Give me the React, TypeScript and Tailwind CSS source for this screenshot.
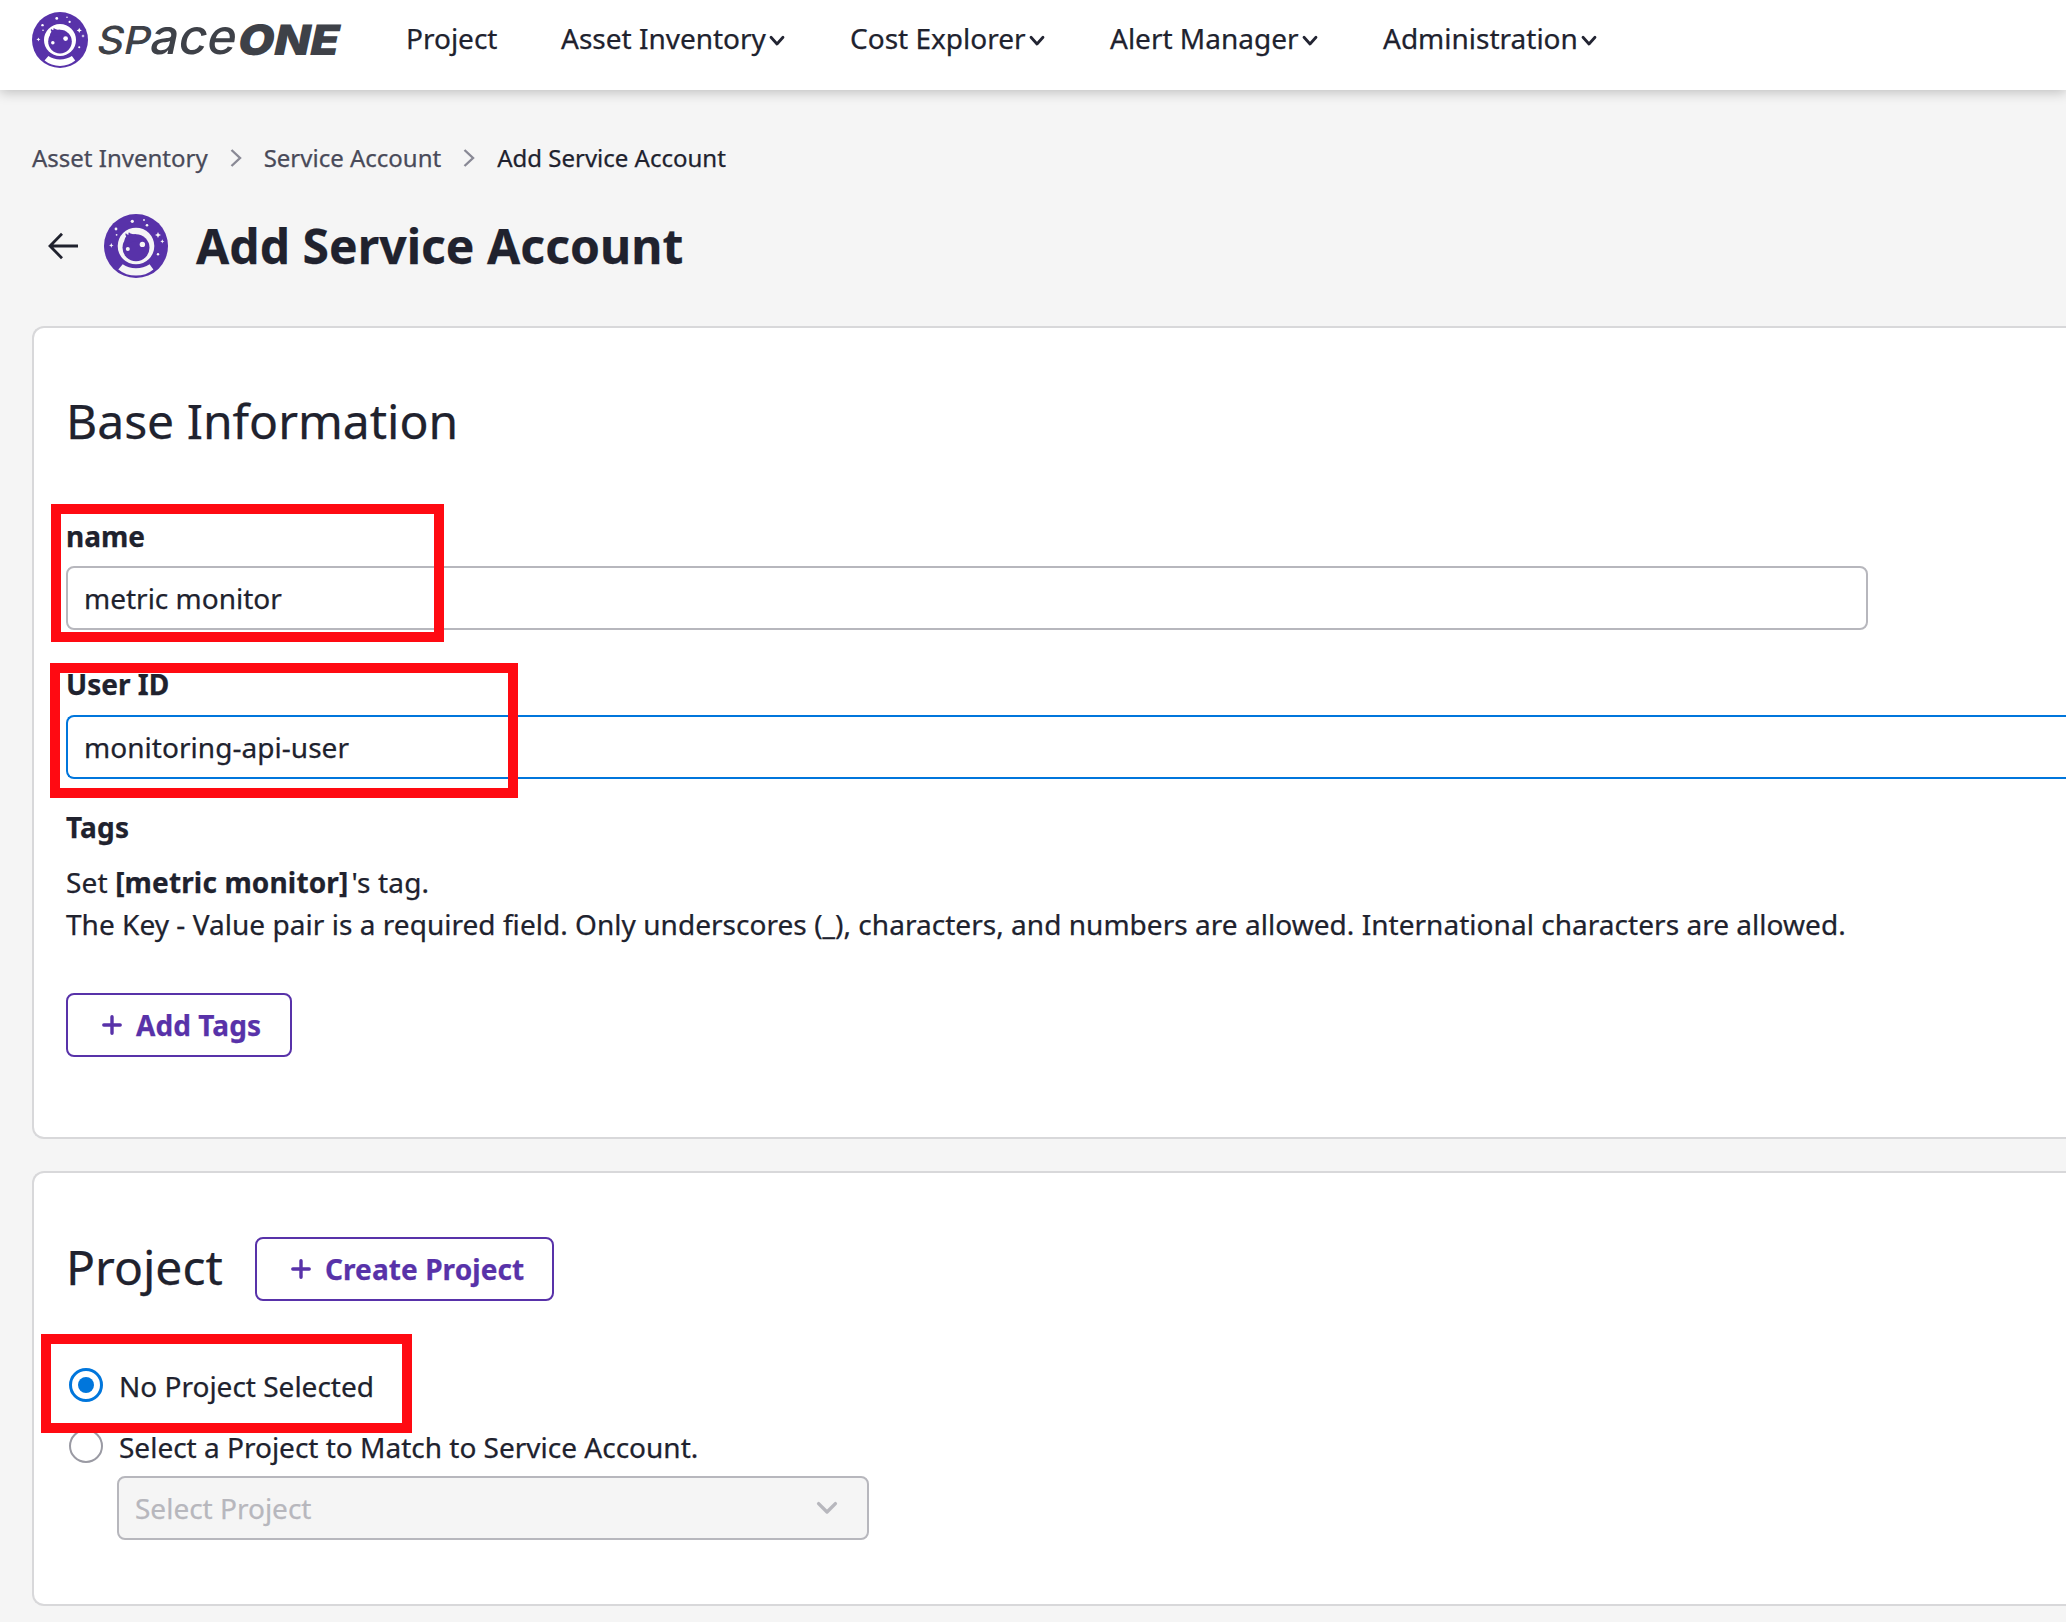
import type { ReactNode } from "react";

function AstronautIcon({ className, ink }: { className: string; ink: string }) {
  return (
    <svg viewBox="0 0 64 64" className={className}>
      <circle cx="32" cy="32" r="32" fill="#5832A9" />
      <path d="M18.7 50.3Q24.5 54.2 32 54.2Q39.5 54.2 45.6 50.3L49.4 55.4Q42 61.6 32 61.6Q22 61.6 14.3 55.4Z" fill={ink} />
      <circle cx="32" cy="32" r="18.3" fill={ink} />
      <circle cx="32" cy="33.8" r="13.5" fill="#5832A9" />
      <path d="M20.5 29Q20 24.5 22.2 22.5Q20.8 20.8 21.8 19Q23 21 24.6 20.6Q24 19.2 25 18.3Q26.6 20.4 32 20.3L34 27Z" fill="#5832A9" />
      <g fill={ink}>
        <circle cx="38.4" cy="30.4" r="2.7" />
        <circle cx="23.8" cy="35" r="2" />
        <circle cx="28.3" cy="7.3" r="1.6" />
        <circle cx="40" cy="6" r="0.9" />
        <circle cx="43" cy="11.3" r="1.3" />
        <circle cx="12" cy="15" r="1.4" />
        <circle cx="12.6" cy="20.8" r="0.9" />
        <circle cx="54" cy="40.3" r="1.2" />
        <path d="M54 18L54.9 20.1L57 21L54.9 21.9L54 24L53.1 21.9L51 21L53.1 20.1Z" />
        <path d="M58.3 25.3L58.9 26.8L60.3 27.4L58.9 28L58.3 29.5L57.7 28L56.3 27.4L57.7 26.8Z" />
        <path d="M7.3 29L8 30.7L9.6 31.4L8 32.1L7.3 33.8L6.6 32.1L5 31.4L6.6 30.7Z" />
      </g>
    </svg>
  );
}

function Wordmark() {
  return (
    <svg viewBox="0 0 252 56" className="ml-2 h-14 w-[252px] overflow-visible" fill="#3E4148" fontFamily="Inter, sans-serif">
      <g transform="translate(0 42) skewX(-12)">
        <text x="-1" y="0" fontSize="38.5" fontWeight="500" textLength="54" lengthAdjust="spacingAndGlyphs">SP</text>
        <text x="52" y="0" fontSize="49" fontWeight="500" textLength="86" lengthAdjust="spacingAndGlyphs">ace</text>
        <text x="140" y="1" fontSize="42" fontWeight="900" textLength="101" lengthAdjust="spacingAndGlyphs">ONE</text>
      </g>
    </svg>
  );
}

function NavItem({ label, menu = true, className = "" }: { label: string; menu?: boolean; className?: string }) {
  return (
    <div className={`flex items-center whitespace-nowrap text-[28px] leading-[42px] ${className}`}>
      <span>{label}</span>
      {menu && (
        <svg viewBox="0 0 16 12" className="ml-[3.5px] mt-[5px] h-3 w-4" fill="none" stroke="#232533" strokeWidth="2.8" strokeLinecap="round" strokeLinejoin="round">
          <path d="M2 2.2L8 9L14 2.2" />
        </svg>
      )}
    </div>
  );
}

function Separator({ className }: { className: string }) {
  return (
    <svg viewBox="0 0 12 18" className={`h-[18px] w-3 ${className}`} fill="none" stroke="#898995" strokeWidth="2.4">
      <path d="M1.5 1L10 9L1.5 17" />
    </svg>
  );
}

function OutlineButton({ children, className }: { children: ReactNode; className: string }) {
  return (
    <button className={`flex h-16 items-center rounded-lg border-2 border-[#5832A9] bg-white pl-[34px] text-[28px] font-bold text-[#5832A9] ${className}`}>
      <svg viewBox="0 0 20 20" className="mr-3.5 h-5 w-5" stroke="#5832A9" strokeWidth="3.4" strokeLinecap="round">
        <path d="M10 1.8V18.2M1.8 10H18.2" />
      </svg>
      <span className="whitespace-nowrap tracking-[0.08px]">{children}</span>
    </button>
  );
}

function Highlight({ className }: { className: string }) {
  return <div className={`pointer-events-none absolute z-10 border-10 border-[#FF0A12] ${className}`} />;
}

export default function App() {
  return (
    <div className="h-[1622px] w-[2066px] overflow-hidden bg-[#F5F5F5] font-['Noto_Sans',sans-serif] text-[#20222E] [-webkit-text-stroke-width:0.25px]">
      <header className="relative flex h-[90px] bg-white pl-8 pt-3 shadow-[0_2px_12px_rgba(0,0,0,0.24)]">
        <AstronautIcon className="h-14 w-14" ink="#ffffff" />
        <Wordmark />
        <nav className="ml-[58px] mt-[5px] flex h-[42px]">
          <NavItem label="Project" menu={false} className="w-[155px]" />
          <NavItem label="Asset Inventory" className="w-[289px]" />
          <NavItem label="Cost Explorer" className="w-[260px]" />
          <NavItem label="Alert Manager" className="w-[273px]" />
          <NavItem label="Administration" />
        </nav>
      </header>

      <main className="pl-8">
        <div className="mt-[50px] flex h-9 items-center whitespace-nowrap text-2xl leading-9 text-[#494A59]">
          <span>Asset Inventory</span>
          <Separator className="ml-[22px] mr-[22px]" />
          <span>Service Account</span>
          <Separator className="ml-[22px] mr-[22px]" />
          <span className="text-[#20222E]">Add Service Account</span>
        </div>

        <div className="mt-[38px] flex h-16 items-center">
          <svg viewBox="0 0 32 28" className="ml-[15px] h-7 w-8" fill="none" stroke="#20222E" strokeWidth="2.8">
            <path d="M31 14H3M15 1.8L3 14L15 26.2" />
          </svg>
          <AstronautIcon className="ml-[25px] h-16 w-16" ink="#F5F5F5" />
          <h1 className="ml-7 whitespace-nowrap text-5xl font-bold leading-[64px] tracking-[0.04px]">Add Service Account</h1>
        </div>

        <section className="mt-12 h-[813px] rounded-l-xl border-2 border-r-0 border-[#D8D8DA] bg-white pl-8 pt-[57px]">
          <h2 className="text-5xl leading-[72px]">Base Information</h2>

          <div className="relative mt-[59px]">
            <label className="block text-[28px] font-bold leading-10">name</label>
            <div className="mt-2.5 flex h-16 w-[1802px] items-center rounded-lg border-2 border-[#B7B7BD] bg-white pl-4 text-[28px]">metric monitor</div>
            <Highlight className="-left-[15px] -top-3 h-[138px] w-[393px]" />
          </div>

          <div className="relative mt-[34px]">
            <label className="block text-[28px] font-bold leading-10">User ID</label>
            <div className="mt-[11px] flex h-16 items-center rounded-l-lg border-2 border-r-0 border-[#0076DC] bg-white pl-4 text-[28px] tracking-[0.04px]">monitoring-api-user</div>
            <Highlight className="-left-4 -top-px h-[135px] w-[468px]" />
          </div>

          <h3 className="mt-7 text-[28px] font-bold leading-10 tracking-[0.2px]">Tags</h3>
          <p className="mt-3.5 whitespace-nowrap text-[28px] leading-[42px] tracking-[0.037px]">
            <span className="tracking-[0.15px]">
              Set <b className="mr-[3px]">[metric monitor]</b>'s tag.
            </span>
            <br />
            The Key - Value pair is a required field. Only underscores (_), characters, and numbers are allowed. International characters are allowed.
          </p>
          <OutlineButton className="mt-12 w-[226px]">Add Tags</OutlineButton>
        </section>

        <section className="mt-8 h-[435px] rounded-l-xl border-2 border-r-0 border-[#D8D8DA] bg-white pl-8 pt-16">
          <div className="flex h-16 items-start">
            <h2 className="w-[189px] text-5xl leading-[60px]">Project</h2>
            <OutlineButton className="w-[299px]">Create Project</OutlineButton>
          </div>

          <div className="relative mt-16 flex h-[42px] items-center pl-[3px] text-[28px] leading-[42px]">
            <span className="-mt-0.5 flex size-[34px] items-center justify-center rounded-full border-3 border-[#0076DC]">
              <span className="size-4 rounded-full bg-[#0076DC]" />
            </span>
            <span className="ml-4">No Project Selected</span>
            <Highlight className="-left-[25px] -top-[31px] h-[99px] w-[371px]" />
          </div>

          <div className="mt-[19px] flex h-[42px] items-center pl-[3px] text-[28px] leading-[42px]">
            <span className="-mt-0.5 size-[34px] rounded-full border-2 border-[#9A9AA3]" />
            <span className="ml-4">Select a Project to Match to Service Account.</span>
          </div>

          <div className="ml-[51px] mt-2 flex h-16 w-[752px] items-center justify-between rounded-lg border-2 border-[#B7B7BD] bg-[#F5F5F5] pl-4 pr-[29px] text-[28px] text-[#B7B7BD]">
            <span>Select Project</span>
            <svg viewBox="0 0 22 14" className="h-3.5 w-[22px]" fill="none" stroke="#B7B7BD" strokeWidth="3.4" strokeLinecap="round" strokeLinejoin="round">
              <path d="M2.6 2.6L11 11L19.4 2.6" />
            </svg>
          </div>
        </section>
      </main>
    </div>
  );
}
